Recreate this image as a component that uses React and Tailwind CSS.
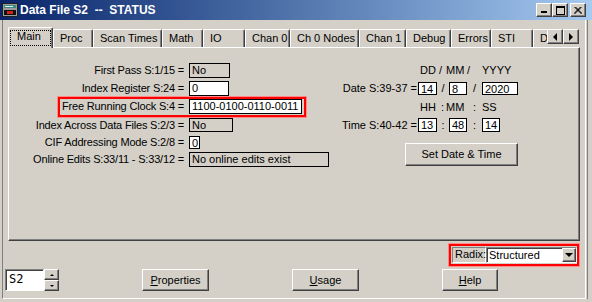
import React from "react";

const raised =
  "border border-t-white border-l-white border-r-[#404040] border-b-[#404040] shadow-[inset_-1px_-1px_#808080]";
const sunken =
  "border border-t-[#808080] border-l-[#808080] border-r-white border-b-white shadow-[inset_1px_1px_#404040]";

const tabs = [
  { label: "Proc", w: "w-[40px]" },
  { label: "Scan Times", w: "w-[69px]" },
  { label: "Math", w: "w-[41px]" },
  { label: "IO", w: "w-[42px]" },
  { label: "Chan 0", w: "w-[45px]" },
  { label: "Ch 0 Nodes", w: "w-[69px]" },
  { label: "Chan 1", w: "w-[47px]" },
  { label: "Debug", w: "w-[45px]" },
  { label: "Errors", w: "w-[40px]" },
  { label: "STI", w: "w-[42px]" },
  { label: "D", w: "w-[16px]" },
];

const rows = [
  { label: "First Pass S:1/15 =", value: "No", box: "w-[41px] h-[15px] bg-[#d4d0c8]", row: "mt-0" },
  { label: "Index Register S:24 =", value: "0", box: "w-[40px] h-[15px] bg-white", row: "mt-[3px]" },
  { label: "Free Running Clock S:4 =", value: "1100-0100-0110-0011", box: "w-[113px] h-[15px] bg-white", row: "mt-[3px]", mark: true },
  { label: "Index Across Data Files S:2/3 =", value: "No", box: "w-[44px] h-[14px] bg-[#d4d0c8]", row: "mt-[4px]" },
  { label: "CIF Addressing Mode S:2/8 =", value: "0", box: "w-[11px] h-[13px] bg-white", row: "mt-[4px]" },
  { label: "Online Edits S:33/11 - S:33/12 =", value: "No online edits exist", box: "w-[140px] h-[15px] bg-[#d4d0c8]", row: "mt-[3px]" },
];

const AppIcon = () => (
  <svg width="16" height="16" viewBox="0 0 16 16" className="shrink-0">
    <rect x="0.5" y="1.5" width="15" height="13" fill="#9c9c9c" stroke="#202020" />
    <rect x="2" y="3" width="12" height="3" fill="#3c8c84" />
    <path d="M3 4.5h8" stroke="#e0f0f0" strokeWidth="1" />
    <rect x="2" y="8" width="12" height="5" fill="#101010" />
    <rect x="5" y="9" width="6" height="3" fill="#d02020" />
  </svg>
);

const CaptionButton = ({ children, className = "" }) => (
  <div className={`w-[16px] h-[14px] bg-[#d4d0c8] ${raised} flex items-center justify-center ${className}`}>
    {children}
  </div>
);

const Button = ({ children, className = "" }) => (
  <div className={`bg-[#d4d0c8] ${raised} flex items-center justify-center ${className}`}>{children}</div>
);

const Arrow = ({ dir, size = 4 }) => {
  const s = size;
  const pts = {
    up: `0,${s} ${s * 2},${s} ${s},0`,
    down: `0,0 ${s * 2},0 ${s},${s}`,
    left: `${s},0 ${s},${s * 2} 0,${s}`,
    right: `0,0 0,${s * 2} ${s},${s}`,
  }[dir];
  const w = dir === "up" || dir === "down" ? s * 2 : s;
  const h = dir === "up" || dir === "down" ? s : s * 2;
  return (
    <svg width={w} height={h} viewBox={`0 0 ${w} ${h}`}>
      <polygon points={pts} fill="#000" />
    </svg>
  );
};

const TitleBar = () => (
  <div className="h-[20px] shrink-0 flex items-center bg-gradient-to-r from-[#0a246a] to-[#a6caf0] pl-[2px] pr-[6px]">
    <AppIcon />
    <span className="ml-[2px] text-white font-bold text-[12px] whitespace-pre">Data File S2  --  STATUS</span>
    <div className="ml-auto flex items-center">
      <CaptionButton>
        <svg width="8" height="8" viewBox="0 0 8 8"><rect x="1" y="5" width="6" height="2" fill="#000" /></svg>
      </CaptionButton>
      <CaptionButton>
        <svg width="9" height="9" viewBox="0 0 9 9">
          <rect x="0.5" y="0.5" width="8" height="8" fill="none" stroke="#000" />
          <rect x="0" y="0" width="9" height="2" fill="#000" />
        </svg>
      </CaptionButton>
      <CaptionButton className="ml-[2px]">
        <svg width="8" height="7" viewBox="0 0 8 7">
          <path d="M0.5 0 L7.5 7 M1.5 0 L8 6.5 M7.5 0 L0.5 7 M6.5 0 L0 6.5" stroke="#000" strokeWidth="1" />
        </svg>
      </CaptionButton>
    </div>
  </div>
);

const TabStrip = () => (
  <div className="flex h-[21px] -mb-[1px] ml-[5px] relative z-10 mt-[7px]">
    <div className="w-[539px] h-[21px] flex items-start overflow-hidden">
      <div className="relative w-[45px] h-[21px] shrink-0 bg-[#d4d0c8] border-t border-l border-t-white border-l-white border-r border-r-[#404040] shadow-[inset_-1px_0_#808080] rounded-tl-[2px] rounded-tr-[2px]">
        <div className="absolute left-[1px] top-[2px] right-[1px] h-[16px] border border-dotted border-black" />
        <div className="pl-[8px] pt-[2px]">Main</div>
      </div>
      {tabs.map((t) => (
        <div
          key={t.label}
          className={`${t.w} h-[18px] mt-[2px] shrink-0 border-t border-l border-t-white border-l-white border-r border-r-[#404040] shadow-[inset_-1px_0_#808080] rounded-tl-[2px] rounded-tr-[2px] pl-[6px] pt-[2px] whitespace-nowrap`}
        >
          {t.label}
        </div>
      ))}
    </div>
    <div className="flex mt-[2px] h-[15px]">
      <Button className="w-[16px] h-[15px]"><Arrow dir="left" /></Button>
      <Button className="w-[16px] h-[15px]"><Arrow dir="right" /></Button>
    </div>
  </div>
);

const Box = ({ className, children }) => (
  <div className={`border border-black px-[2px] leading-[12px] whitespace-nowrap overflow-hidden ${className}`}>{children}</div>
);

const LeftFields = () => (
  <div className="w-[321px] pt-[15px] flex flex-col">
    {rows.map((r) => (
      <div key={r.label} className={`relative flex items-center ${r.row}`}>
        <div className="w-[175px] text-right whitespace-nowrap tracking-[-0.18px]">{r.label}</div>
        <Box className={`ml-[5px] ${r.box}`}>{r.value}</Box>
        {r.mark && (
          <div className="absolute left-[49px] -top-[2px] w-[248px] h-[20px] border-2 border-[#ff0000] shadow-[0_0_0_1px_#ff8a8a]" />
        )}
      </div>
    ))}
  </div>
);

const DateTime = () => (
  <div className="flex-1 pt-[15px] flex flex-col">
    <div className="h-[15px] flex items-center">
      <div className="w-[88px]" />
      <span className="w-[21px] pl-[2px]">DD</span>
      <span className="w-[7px]">/</span>
      <span className="w-[20px]">MM</span>
      <span className="w-[16px] pl-[1px]">/</span>
      <span>YYYY</span>
    </div>
    <div className="mt-[4px] h-[13px] flex items-center">
      <div className="w-[87px] text-right whitespace-nowrap">Date S:39-37 =</div>
      <Box className="ml-[1px] w-[19px] h-[13px] bg-white">14</Box>
      <span className="w-[12px] text-center">/</span>
      <Box className="w-[18px] h-[13px] bg-white">8</Box>
      <span className="w-[15px] text-center">/</span>
      <Box className="w-[36px] h-[13px] bg-white">2020</Box>
    </div>
    <div className="mt-[5px] h-[15px] flex items-center">
      <div className="w-[88px]" />
      <span className="w-[23px] pl-[2px]">HH</span>
      <span className="w-[5px]">:</span>
      <span className="w-[26px]">MM</span>
      <span className="w-[10px] pl-[1px]">:</span>
      <span>SS</span>
    </div>
    <div className="mt-[3px] h-[14px] flex items-center">
      <div className="w-[87px] text-right whitespace-nowrap">Time S:40-42 =</div>
      <Box className="ml-[1px] w-[19px] h-[14px] bg-white">13</Box>
      <span className="w-[12px] text-center">:</span>
      <Box className="w-[18px] h-[14px] bg-white">48</Box>
      <span className="w-[15px] text-center">:</span>
      <Box className="w-[18px] h-[14px] bg-white">14</Box>
    </div>
    <Button className="mt-[11px] ml-[75px] w-[113px] h-[23px]">Set Date &amp; Time</Button>
  </div>
);

const RadixRow = () => (
  <div className="mt-[3px] h-[22px] flex justify-end pr-[6px]">
    <div className="w-[130px] h-[22px] border-2 border-[#ff0000] shadow-[0_0_0_1px_#ff8a8a] flex items-center pl-[1px]">
      <div className="w-[34px] h-[16px] border border-t-[#808080] border-l-[#808080] border-r-white border-b-white pl-[2px] leading-[13px]">
        Radix:
      </div>
      <div className={`w-[91px] h-[16px] ${sunken} bg-white flex`}>
        <div className="flex-1 pl-[2px] pt-[1px] leading-[12px]">Structured</div>
        <Button className="w-[14px] h-full"><Arrow dir="down" size={4} /></Button>
      </div>
    </div>
  </div>
);

const BottomRow = () => (
  <div className="mt-[3px] h-[22px] flex items-center pl-[2px]">
    <div className={`w-[39px] h-[22px] bg-white ${sunken} pl-[3px] pt-[3px] font-['DejaVu_Sans_Mono',monospace] text-[12px]`}>
      S2
    </div>
    <div className="w-[15px] h-[22px] flex flex-col">
      <Button className="h-[11px]"><Arrow dir="up" size={2} /></Button>
      <Button className="h-[11px]"><Arrow dir="down" size={2} /></Button>
    </div>
    <Button className="ml-[83px] w-[67px] h-[22px]">
      <span><span className="underline">P</span>roperties</span>
    </Button>
    <Button className="ml-[83px] w-[67px] h-[22px]">
      <span><span className="underline">U</span>sage</span>
    </Button>
    <Button className="ml-[83px] w-[56px] h-[22px]">
      <span><span className="underline">H</span>elp</span>
    </Button>
  </div>
);

export default function App() {
  return (
    <div className="w-[592px] h-[302px] bg-[#d4d0c8] flex flex-col overflow-hidden font-['Liberation_Sans',Arial,sans-serif] text-[11px] leading-[13px] text-black select-none">
      <TitleBar />
      <div className="flex-1 flex pl-[2px] pr-[4px] pb-[3px] min-h-0">
        <div className="flex-1 flex border-r border-[#808080] pr-[1px]">
          <div className="flex-1 flex flex-col border-l border-l-[#808080] border-r border-r-white border-b border-b-white">
            <TabStrip />
            <div className="ml-[5px] w-[572px] h-[194px] shrink-0 border border-t-white border-l-white border-r-[#404040] border-b-[#404040] shadow-[inset_-1px_-1px_#808080] flex">
              <LeftFields />
              <DateTime />
            </div>
            <RadixRow />
            <BottomRow />
          </div>
        </div>
      </div>
    </div>
  );
}
